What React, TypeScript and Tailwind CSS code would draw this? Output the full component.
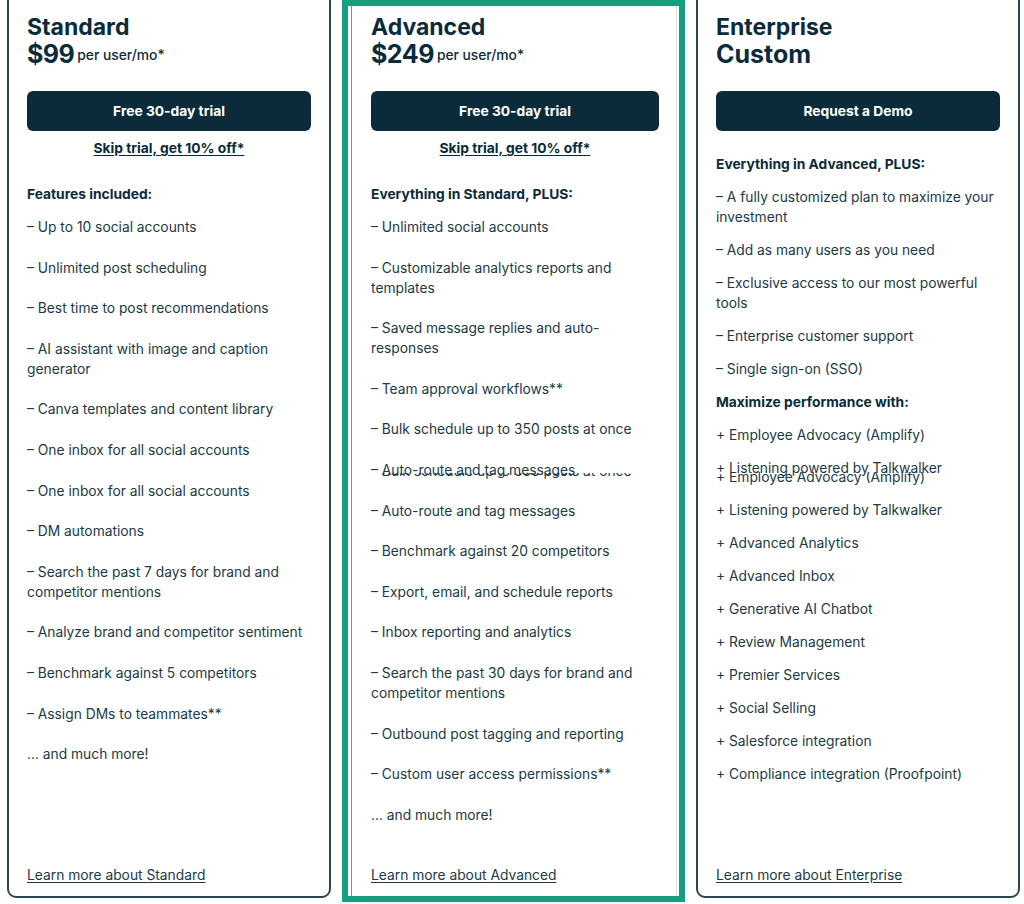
import type React from "react"

const standard: string[] = [
  "– Up to 10 social accounts",
  "– Unlimited post scheduling",
  "– Best time to post recommendations",
  "– AI assistant with image and caption generator",
  "– Canva templates and content library",
  "– One inbox for all social accounts",
  "– One inbox for all social accounts",
  "– DM automations",
  "– Search the past 7 days for brand and competitor mentions",
  "– Analyze brand and competitor sentiment",
  "– Benchmark against 5 competitors",
  "– Assign DMs to teammates**",
  "... and much more!",
]

const advanced: string[] = [
  "– Unlimited social accounts",
  "– Customizable analytics reports and templates",
  "– Saved message replies and auto-responses",
  "– Team approval workflows**",
  "– Bulk schedule up to 350 posts at once",
  "GHOST",
  "– Auto-route and tag messages",
  "– Benchmark against 20 competitors",
  "– Export, email, and schedule reports",
  "– Inbox reporting and analytics",
  "– Search the past 30 days for brand and competitor mentions",
  "– Outbound post tagging and reporting",
  "– Custom user access permissions**",
  "... and much more!",
]

const enterpriseTop: string[] = [
  "– A fully customized plan to maximize your investment",
  "– Add as many users as you need",
  "– Exclusive access to our most powerful tools",
  "– Enterprise customer support",
  "– Single sign-on (SSO)",
]

const enterpriseAddons: string[] = [
  "+ Employee Advocacy (Amplify)",
  "GHOST",
  "+ Listening powered by Talkwalker",
  "+ Advanced Analytics",
  "+ Advanced Inbox",
  "+ Generative AI Chatbot",
  "+ Review Management",
  "+ Premier Services",
  "+ Social Selling",
  "+ Salesforce integration",
  "+ Compliance integration (Proofpoint)",
]

const font = "font-['Inter','Liberation_Sans',sans-serif]"

function TrialButton({ label }: { label: string }) {
  return (
    <button className="h-[40px] w-full rounded-[6px] bg-[#0b2b3a] text-[13.8px] font-bold text-white">
      {label}
    </button>
  )
}

function SkipLink() {
  return (
    <div className="mt-[7px] text-center text-[13.8px] font-bold leading-[20px] text-[#0b2b3a] underline underline-offset-2">
      Skip trial, get 10% off*
    </div>
  )
}

function Heading({ children, className = "" }: { children: React.ReactNode; className?: string }) {
  return <div className={"text-[13.8px] font-bold leading-[20px] text-[#0b2b3a] " + className}>{children}</div>
}

function LearnMore({ name }: { name: string }) {
  return (
    <div className="mt-auto mb-[11px] text-[13.8px] leading-[20px] text-[#1b3a46] underline underline-offset-2">
      Learn more about {name}
    </div>
  )
}

function Price({ amount }: { amount: string }) {
  return (
    <div className="flex h-[28px] items-center gap-[3px] text-[#0b2b3a]">
      <span className="text-[25px] font-bold leading-[28px] tracking-[-0.5px]">{amount}</span>
      <span className="pt-[1px] text-[13.8px] font-medium leading-[20px]">per user/mo*</span>
    </div>
  )
}

export default function App() {
  return (
    <main className={"flex h-[904px] items-start gap-[11px] overflow-hidden bg-white px-[7px] " + font}>
      {/* Standard */}
      <div className="-mt-[10px] flex h-[908px] w-[324px] shrink-0 flex-col rounded-[9px] border-2 border-[#2c4752] px-[18px] pt-[22px]">
        <div className="text-[23px] font-bold leading-[26px] text-[#0b2b3a]">Standard</div>
        <Price amount="$99" />
        <div className="mt-[23px]">
          <TrialButton label="Free 30-day trial" />
        </div>
        <SkipLink />
        <Heading className="mt-[26px]">Features included:</Heading>
        <div className="mt-[13px] flex flex-col gap-[20.6px] text-[13.8px] leading-[20px] text-[#1b3a46]">
          {standard.map((t, i) => (
            <div key={i}>{t}</div>
          ))}
        </div>
        <LearnMore name="Standard" />
      </div>

      {/* Advanced (highlighted) */}
      <div className="flex h-[902px] w-[343px] shrink-0 border-[6px] border-[#14a07f] bg-white">
        <div className="ml-[3px] mr-[2px] flex flex-1 flex-col border-l border-r border-l-[#c4716c] border-r-[#d9d9d9] pl-[19px] pr-[17px] pt-[8px]">
          <div className="text-[23px] font-bold leading-[26px] text-[#0b2b3a]">Advanced</div>
          <Price amount="$249" />
          <div className="mt-[23px]">
            <TrialButton label="Free 30-day trial" />
          </div>
          <SkipLink />
          <Heading className="mt-[26px]">Everything in Standard, PLUS:</Heading>
          <div className="mt-[13px] flex flex-col gap-[20.6px] text-[13.8px] leading-[20px] text-[#1b3a46]">
            {advanced.map((t, i) =>
              t === "GHOST" ? (
                <div key={i} className="relative">
                  <div>– Auto-route and tag messages</div>
                  <div className="absolute left-0 top-[13px] h-[6px] overflow-hidden whitespace-nowrap">
                    <div className="-mt-[12px]">– Bulk schedule up to 350 posts at once</div>
                  </div>
                </div>
              ) : (
                <div key={i}>{t}</div>
              ),
            )}
          </div>
          <LearnMore name="Advanced" />
        </div>
      </div>

      {/* Enterprise */}
      <div className="-mt-[10px] flex h-[908px] w-[324px] shrink-0 flex-col rounded-[9px] border-2 border-[#2c4752] px-[18px] pt-[22px]">
        <div className="text-[23px] font-bold leading-[26px] text-[#0b2b3a]">Enterprise</div>
        <div className="text-[25px] font-bold leading-[28px] text-[#0b2b3a]">Custom</div>
        <div className="mt-[23px]">
          <TrialButton label="Request a Demo" />
        </div>
        <Heading className="mt-[23px]">Everything in Advanced, PLUS:</Heading>
        <div className="mt-[13px] flex flex-col gap-[13px] text-[13.8px] leading-[20px] text-[#1b3a46]">
          {enterpriseTop.map((t, i) => (
            <div key={i}>{t}</div>
          ))}
          <Heading>Maximize performance with:</Heading>
          {enterpriseAddons.map((t, i) =>
            t === "GHOST" ? (
              <div key={i} className="relative pb-[9px]">
                <div>+ Listening powered by Talkwalker</div>
                <div className="absolute left-0 top-[14px] h-[15px] overflow-hidden whitespace-nowrap">
                  <div className="-mt-[5px]">+ Employee Advocacy (Amplify)</div>
                </div>
              </div>
            ) : (
              <div key={i}>{t}</div>
            ),
          )}
        </div>
        <LearnMore name="Enterprise" />
      </div>
    </main>
  )
}
